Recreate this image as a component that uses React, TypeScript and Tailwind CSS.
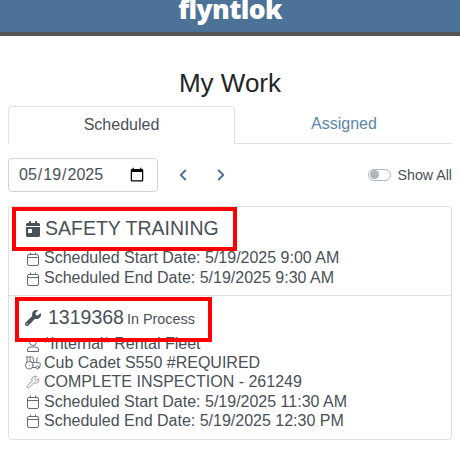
import { ChevronLeft, ChevronRight, Tractor, Wrench } from "lucide-react"
import { FaCalendarDay, FaWrench } from "react-icons/fa"

const CalendarLine = () => (
  <svg width="14" height="16" viewBox="0 0 14 16" fill="none" stroke="#5f6b76" strokeWidth="1" className="mt-[2px] shrink-0">
    <rect x="1.5" y="3.5" width="11" height="11" rx="1.5" />
    <path d="M1.5 6.5h11M4.5 1.5v2M9.5 1.5v2" />
  </svg>
)

const UserLine = () => (
  <svg width="14" height="16" viewBox="0 0 14 16" fill="none" stroke="#5f6b76" strokeWidth="1" className="mt-[2px] shrink-0">
    <circle cx="7" cy="5" r="3.5" />
    <path d="M1.5 14.5v-1.5a3 3 0 0 1 3-3h5a3 3 0 0 1 3 3v1.5z" />
  </svg>
)

const Row = ({ icon, text }: { icon: React.ReactNode; text: string }) => (
  <div className="flex items-center">
    <span className="flex w-[22px] shrink-0 justify-center">{icon}</span>
    <span className="whitespace-nowrap">{text}</span>
  </div>
)

export default function App() {
  return (
    <div className="relative h-[449px] w-[460px] overflow-hidden bg-white font-['Liberation_Sans',sans-serif] text-[#495057]">
      {/* HEADER */}
      <div className="flex h-[36px] justify-center overflow-hidden border-b-4 border-[#555555] bg-[#4d7298]">
        <span className="mt-[-10px] font-['Open_Sans',sans-serif] text-[26.5px] font-extrabold leading-[38px] tracking-[-0.6px] text-white">
          flyntlok
        </span>
      </div>

      <h1 className="mt-[29px] text-center text-[26px] leading-[36px] text-[#212529]">My Work</h1>

      {/* TABS */}
      <div className="mx-[8px] mt-[5px] flex h-[38px] text-[16px]">
        <div className="flex w-[227px] items-center justify-center rounded-t border border-b-0 border-[#dee2e6] pb-[2px]">
          Scheduled
        </div>
        <div className="flex flex-1 items-center justify-center border-b border-[#dee2e6] pb-[2px] pl-[1px] text-[#5c86ad]">
          Assigned
        </div>
      </div>

      {/* FILTROS */}
      <div className="mx-[8px] mt-[14px] flex h-[34px] items-center">
        <input
          type="date"
          defaultValue="2025-05-19"
          className="h-[34px] w-[150px] rounded border border-[#ced4da] pl-[9px] pr-[10px] text-[16px] text-[#495057]"
        />
        <ChevronLeft size={18} strokeWidth={2.5} className="ml-[16px] text-[#4d7298]" />
        <ChevronRight size={18} strokeWidth={2.5} className="ml-[20px] text-[#4d7298]" />
        <div className="ml-auto flex items-center">
          <span className="flex h-[12px] w-[23px] items-center rounded-full border border-[#adb5bd] px-[1px]">
            <span className="size-[9px] rounded-full bg-[#adb5bd]" />
          </span>
          <span className="ml-[7px] pt-[1px] text-[14.2px]">Show All</span>
        </div>
      </div>

      {/* LISTA */}
      <div className="mx-[8px] mt-[14px] rounded border border-[#dfdfdf] text-[16px]">
        <div className="h-[89px] border-b border-[#dfdfdf] pl-[16px] pt-[10px]">
          <div className="flex h-[24px] items-center text-[19.5px]">
            <FaCalendarDay size={16} className="mr-[4px]" />
            SAFETY TRAINING
          </div>
          <div className="ml-[-3px] mt-[7px] leading-[20px]">
            <Row icon={<CalendarLine />} text="Scheduled Start Date: 5/19/2025 9:00 AM" />
            <Row icon={<CalendarLine />} text="Scheduled End Date: 5/19/2025 9:30 AM" />
          </div>
        </div>
        <div className="h-[143px] pl-[16px] pt-[10px]">
          <div className="flex h-[24px] items-center">
            <FaWrench size={16} className="mr-[7px]" />
            <span className="text-[19.5px]">1319368</span>
            <span className="ml-[3px] mt-[3px] text-[14.4px]">In Process</span>
          </div>
          <div className="ml-[-3px] mt-[4px] leading-[19.2px]">
            <Row icon={<UserLine />} text="*Internal* Rental Fleet" />
            <Row icon={<Tractor size={18} strokeWidth={1.2} color="#5f6b76" />} text="Cub Cadet S550 #REQUIRED" />
            <Row icon={<Wrench size={14} strokeWidth={1.2} color="#5f6b76" />} text="COMPLETE INSPECTION - 261249" />
            <Row icon={<CalendarLine />} text="Scheduled Start Date: 5/19/2025 11:30 AM" />
            <Row icon={<CalendarLine />} text="Scheduled End Date: 5/19/2025 12:30 PM" />
          </div>
        </div>
      </div>

      {/* MARCAÇÕES VERMELHAS */}
      <div className="absolute left-[12px] top-[207px] h-[44px] w-[225px] border-4 border-[#ff0000]" />
      <div className="absolute left-[15px] top-[297px] h-[45px] w-[197px] border-4 border-[#ff0000]" />
    </div>
  )
}
